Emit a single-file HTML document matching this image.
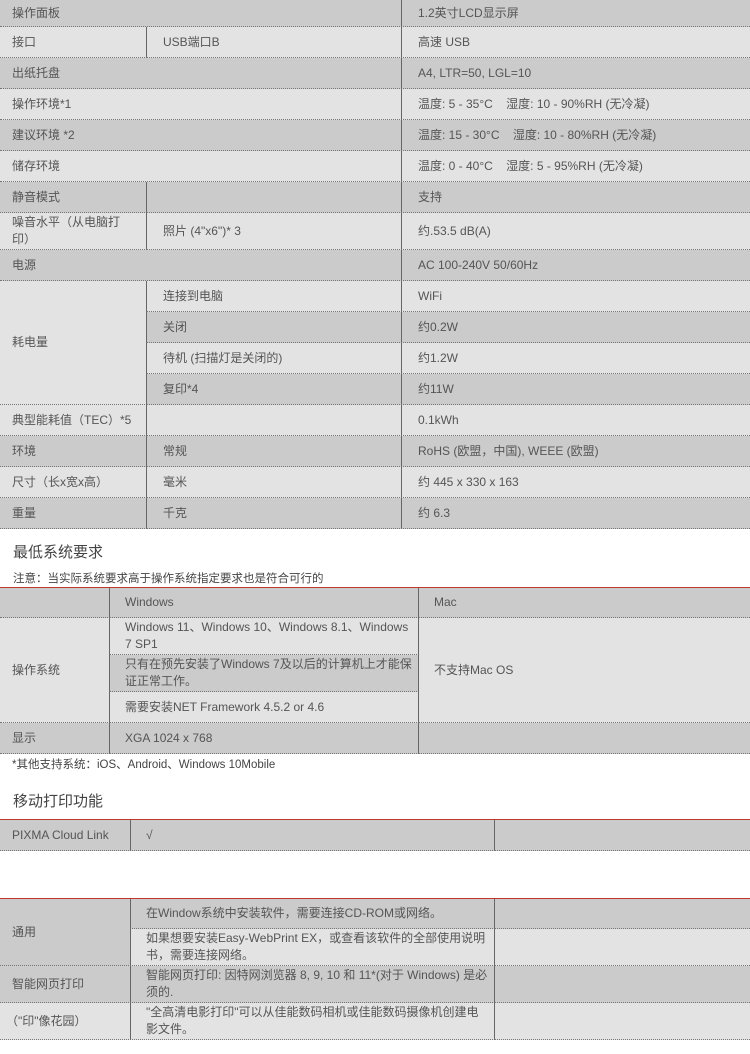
<!DOCTYPE html>
<html><head><meta charset="utf-8"><style>
*{margin:0;padding:0;box-sizing:border-box}
body{width:750px;height:1054px;background:#fff;position:relative;overflow:hidden;font-family:"Liberation Sans","Noto Sans CJK SC",sans-serif;font-size:12px;color:#555}
.c{position:absolute;border-bottom:1px dotted #777;display:flex;align-items:center;line-height:17px}
.d{background:#cbcbcb}.l{background:#e3e3e3}
.v{border-left:1px solid #666}
.h{position:absolute;font-size:15px;color:#444}
.n{position:absolute;font-size:11.5px;color:#444}
.r{position:absolute;left:0;width:750px;height:1px;background:#c0392b}
</style></head><body>
<div class="c d" style="left:0;top:0;width:402px;height:27px;padding-left:12px">操作面板</div>
<div class="c d v" style="left:401px;top:0;width:349px;height:27px;padding-left:16px">1.2英寸LCD显示屏</div>

<div class="c l" style="left:0;top:27px;width:147px;height:31px;padding-left:12px">接口</div>
<div class="c l v" style="left:146px;top:27px;width:256px;height:31px;padding-left:16px">USB端口B</div>
<div class="c l v" style="left:401px;top:27px;width:349px;height:31px;padding-left:16px">高速 USB</div>

<div class="c d" style="left:0;top:58px;width:402px;height:31px;padding-left:12px">出纸托盘</div>
<div class="c d v" style="left:401px;top:58px;width:349px;height:31px;padding-left:16px">A4, LTR=50, LGL=10</div>

<div class="c l" style="left:0;top:89px;width:402px;height:31px;padding-left:12px">操作环境*1</div>
<div class="c l v" style="left:401px;top:89px;width:349px;height:31px;padding-left:16px">温度: 5 - 35°C&nbsp;&nbsp;&nbsp; 湿度: 10 - 90%RH (无冷凝)</div>

<div class="c d" style="left:0;top:120px;width:402px;height:31px;padding-left:12px">建议环境 *2</div>
<div class="c d v" style="left:401px;top:120px;width:349px;height:31px;padding-left:16px">温度: 15 - 30°C&nbsp;&nbsp;&nbsp; 湿度: 10 - 80%RH (无冷凝)</div>

<div class="c l" style="left:0;top:151px;width:402px;height:31px;padding-left:12px">储存环境</div>
<div class="c l v" style="left:401px;top:151px;width:349px;height:31px;padding-left:16px">温度: 0 - 40°C&nbsp;&nbsp;&nbsp; 湿度: 5 - 95%RH (无冷凝)</div>

<div class="c d" style="left:0;top:182px;width:147px;height:31px;padding-left:12px">静音模式</div>
<div class="c d v" style="left:146px;top:182px;width:256px;height:31px"></div>
<div class="c d v" style="left:401px;top:182px;width:349px;height:31px;padding-left:16px">支持</div>

<div class="c l" style="left:0;top:213px;width:147px;height:37px;padding-left:12px;padding-right:18px">噪音水平（从电脑打印）</div>
<div class="c l v" style="left:146px;top:213px;width:256px;height:37px;padding-left:16px">照片 (4"x6")* 3</div>
<div class="c l v" style="left:401px;top:213px;width:349px;height:37px;padding-left:16px">约.53.5 dB(A)</div>

<div class="c d" style="left:0;top:250px;width:402px;height:31px;padding-left:12px">电源</div>
<div class="c d v" style="left:401px;top:250px;width:349px;height:31px;padding-left:16px">AC 100-240V 50/60Hz</div>

<div class="c l" style="left:0;top:281px;width:147px;height:124px;padding-left:12px">耗电量</div>
<div class="c l v" style="left:146px;top:281px;width:256px;height:31px;padding-left:16px">连接到电脑</div>
<div class="c l v" style="left:401px;top:281px;width:349px;height:31px;padding-left:16px">WiFi</div>
<div class="c d v" style="left:146px;top:312px;width:256px;height:31px;padding-left:16px">关闭</div>
<div class="c d v" style="left:401px;top:312px;width:349px;height:31px;padding-left:16px">约0.2W</div>
<div class="c l v" style="left:146px;top:343px;width:256px;height:31px;padding-left:16px">待机 (扫描灯是关闭的)</div>
<div class="c l v" style="left:401px;top:343px;width:349px;height:31px;padding-left:16px">约1.2W</div>
<div class="c d v" style="left:146px;top:374px;width:256px;height:31px;padding-left:16px">复印*4</div>
<div class="c d v" style="left:401px;top:374px;width:349px;height:31px;padding-left:16px">约11W</div>

<div class="c l" style="left:0;top:405px;width:147px;height:31px;padding-left:12px">典型能耗值（TEC）*5</div>
<div class="c l v" style="left:146px;top:405px;width:256px;height:31px"></div>
<div class="c l v" style="left:401px;top:405px;width:349px;height:31px;padding-left:16px">0.1kWh</div>

<div class="c d" style="left:0;top:436px;width:147px;height:31px;padding-left:12px">环境</div>
<div class="c d v" style="left:146px;top:436px;width:256px;height:31px;padding-left:16px">常规</div>
<div class="c d v" style="left:401px;top:436px;width:349px;height:31px;padding-left:16px">RoHS (欧盟，中国), WEEE (欧盟)</div>

<div class="c l" style="left:0;top:467px;width:147px;height:31px;padding-left:12px">尺寸（长x宽x高）</div>
<div class="c l v" style="left:146px;top:467px;width:256px;height:31px;padding-left:16px">毫米</div>
<div class="c l v" style="left:401px;top:467px;width:349px;height:31px;padding-left:16px">约 445 x 330 x 163</div>

<div class="c d" style="left:0;top:498px;width:147px;height:31px;padding-left:12px">重量</div>
<div class="c d v" style="left:146px;top:498px;width:256px;height:31px;padding-left:16px">千克</div>
<div class="c d v" style="left:401px;top:498px;width:349px;height:31px;padding-left:16px">约 6.3</div>

<div class="h" style="left:13px;top:541px">最低系统要求</div>
<div class="n" style="left:13px;top:570px">注意：当实际系统要求高于操作系统指定要求也是符合可行的</div>
<div class="r" style="top:587px"></div>
<div class="c d" style="left:0;top:588px;width:110px;height:30px"></div>
<div class="c d v" style="left:109px;top:588px;width:310px;height:30px;padding-left:15px">Windows</div>
<div class="c d v" style="left:418px;top:588px;width:332px;height:30px;padding-left:15px">Mac</div>

<div class="c l" style="left:0;top:618px;width:110px;height:105px;padding-left:12px">操作系统</div>
<div class="c l v" style="left:109px;top:618px;width:310px;height:37px;padding-left:15px;padding-right:6px">Windows 11、Windows 10、Windows 8.1、Windows 7 SP1</div>
<div class="c d v" style="left:109px;top:655px;width:310px;height:37px;padding-left:15px;padding-right:6px">只有在预先安装了Windows 7及以后的计算机上才能保证正常工作。</div>
<div class="c l v" style="left:109px;top:692px;width:310px;height:31px;padding-left:15px">需要安装NET Framework 4.5.2 or 4.6</div>
<div class="c l v" style="left:418px;top:618px;width:332px;height:105px;padding-left:15px">不支持Mac OS</div>

<div class="c d" style="left:0;top:723px;width:110px;height:31px;padding-left:12px">显示</div>
<div class="c d v" style="left:109px;top:723px;width:310px;height:31px;padding-left:15px">XGA 1024 x 768</div>
<div class="c d v" style="left:418px;top:723px;width:332px;height:31px"></div>
<div class="n" style="left:12px;top:756px">*其他支持系统：iOS、Android、Windows 10Mobile</div>

<div class="h" style="left:13px;top:790px">移动打印功能</div>
<div class="r" style="top:819px"></div>
<div class="c d" style="left:0;top:820px;width:131px;height:31px;padding-left:12px">PIXMA Cloud Link</div>
<div class="c d v" style="left:130px;top:820px;width:365px;height:31px;padding-left:15px">√</div>
<div class="c d v" style="left:494px;top:820px;width:256px;height:31px"></div>

<div class="r" style="top:898px"></div>
<div class="c d" style="left:0;top:899px;width:131px;height:67px;padding-left:12px">通用</div>
<div class="c d v" style="left:130px;top:899px;width:365px;height:30px;padding-left:15px">在Window系统中安装软件，需要连接CD-ROM或网络。</div>
<div class="c d v" style="left:494px;top:899px;width:256px;height:30px"></div>
<div class="c l v" style="left:130px;top:929px;width:365px;height:37px;padding-left:15px;padding-right:6px">如果想要安装Easy-WebPrint EX，或查看该软件的全部使用说明书，需要连接网络。</div>
<div class="c l v" style="left:494px;top:929px;width:256px;height:37px"></div>

<div class="c d" style="left:0;top:966px;width:131px;height:37px;padding-left:12px">智能网页打印</div>
<div class="c d v" style="left:130px;top:966px;width:365px;height:37px;padding-left:15px;padding-right:6px">智能网页打印: 因特网浏览器 8, 9, 10 和 11*(对于 Windows) 是必须的.</div>
<div class="c d v" style="left:494px;top:966px;width:256px;height:37px"></div>

<div class="c l" style="left:0;top:1003px;width:131px;height:37px;padding-left:6px">（"印"像花园）</div>
<div class="c l v" style="left:130px;top:1003px;width:365px;height:37px;padding-left:15px;padding-right:6px">"全高清电影打印"可以从佳能数码相机或佳能数码摄像机创建电影文件。</div>
<div class="c l v" style="left:494px;top:1003px;width:256px;height:37px"></div>
</body></html>
